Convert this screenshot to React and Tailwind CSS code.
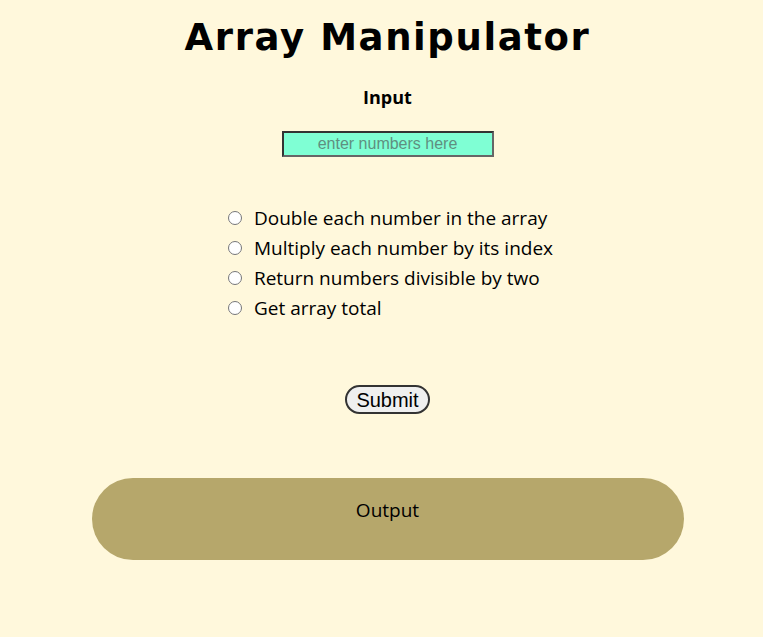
import React from 'react';

const options = [
  'Double each number in the array',
  'Multiply each number by its index',
  'Return numbers divisible by two',
  'Get array total',
];

export default function App() {
  return (
    <div className="min-h-screen w-full bg-[#fff8dc] text-black font-['Trebuchet_MS','Open_Sans',sans-serif] flex flex-col items-center pl-[12px]">
      <h1 className="mt-[12px] font-['DejaVu_Sans',Verdana,sans-serif] font-bold text-[37px] leading-[52px] tracking-[1.6px]">
        Array Manipulator
      </h1>

      <label className="mt-[21px] text-[18px] font-bold leading-[24px]">Input</label>

      <input
        type="text"
        placeholder="enter numbers here"
        className="mt-[22px] w-[212px] h-[26px] bg-[#7fffd4] border-2 border-t-[#333] border-l-[#333] border-b-[#666] border-r-[#666] text-center text-[16px] font-['Liberation_Sans',Arial,sans-serif] placeholder:text-[#5f8f80] outline-none"
      />

      <div className="mt-[51px] flex flex-col gap-[10px] pl-[6px]">
        {options.map((o) => (
          <label key={o} className="flex items-center gap-[12px] text-[19px] leading-[20px] h-[20px]">
            <input type="radio" name="op" className="w-[14px] h-[14px] m-0 accent-gray-500" />
            <span>{o}</span>
          </label>
        ))}
      </div>

      <button className="mt-[67px] h-[29px] px-[9px] rounded-full border-2 border-[#333] bg-[#efefef] text-[20px] leading-[24px] font-['Liberation_Sans',Arial,sans-serif]">
        Submit
      </button>

      <div className="mt-[64px] w-[592px] h-[82px] rounded-full bg-[#b6a76b] flex justify-center pt-[20px]">
        <span className="text-[19px] leading-[24px]">Output</span>
      </div>
    </div>
  );
}
